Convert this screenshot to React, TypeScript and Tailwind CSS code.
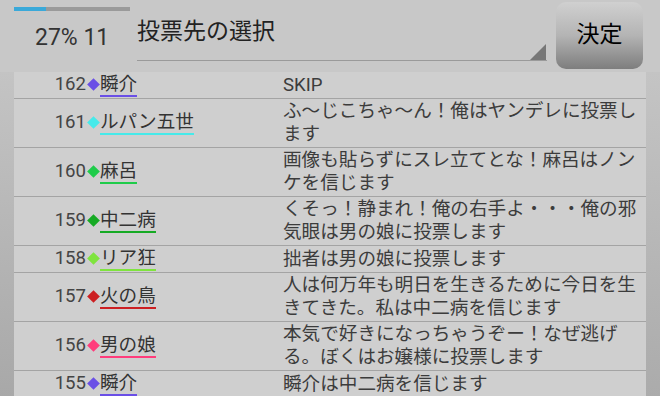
const rows = [
  { no: 162, name: "瞬介", color: "bg-[#6a4fe6]", line: "border-[#6a4fe6]", text: "SKIP" },
  { no: 161, name: "ルパン五世", color: "bg-[#46eaea]", line: "border-[#46eaea]", text: "ふ～じこちゃ～ん！俺はヤンデレに投票します" },
  { no: 160, name: "麻呂", color: "bg-[#1fcc4a]", line: "border-[#1fcc4a]", text: "画像も貼らずにスレ立てとな！麻呂はノンケを信じます" },
  { no: 159, name: "中二病", color: "bg-[#16aa24]", line: "border-[#16aa24]", text: "くそっ！静まれ！俺の右手よ・・・俺の邪気眼は男の娘に投票します" },
  { no: 158, name: "リア狂", color: "bg-[#7fe43e]", line: "border-[#7fe43e]", text: "拙者は男の娘に投票します" },
  { no: 157, name: "火の鳥", color: "bg-[#cc1f22]", line: "border-[#cc1f22]", text: "人は何万年も明日を生きるために今日を生きてきた。私は中二病を信じます" },
  { no: 156, name: "男の娘", color: "bg-[#ff3c7c]", line: "border-[#ff3c7c]", text: "本気で好きになっちゃうぞー！なぜ逃げる。ぼくはお嬢様に投票します" },
  { no: 155, name: "瞬介", color: "bg-[#6a4fe6]", line: "border-[#6a4fe6]", text: "瞬介は中二病を信じます" },
];

function Row({ r }: { r: (typeof rows)[number] }) {
  return (
    <div className="flex items-center border-b border-[#a4a4a4] py-[1px]">
      <div className="w-[269px] shrink-0 flex items-start">
        <span className="w-[72px] text-right leading-[22px] text-[#444]">{r.no}</span>
        <span className="w-[14px] h-[22px] flex items-center justify-center">
          <span className={`w-[9px] h-[9px] rotate-45 ${r.color}`} />
        </span>
        <span className={`leading-[22px] text-[#333] border-b-2 ${r.line}`}>{r.name}</span>
      </div>
      <div className="flex-1 min-w-0 leading-[23px] text-[#3c3c3c]">{r.text}</div>
    </div>
  );
}

export default function App() {
  return (
    <div
      className="w-[660px] h-[396px] overflow-hidden bg-[#c8c8c8] flex flex-col"
      style={{ fontFamily: "Roboto, 'Noto Sans CJK JP', sans-serif" }}
    >
      {/* header */}
      <div className="h-[72px] shrink-0 flex">
        <div className="w-[137px] shrink-0 pl-[14px] pt-[7px]">
          <div className="w-[116px] h-[4px] bg-[#9a9a9a]">
            <div className="w-[32px] h-full bg-[#3aa9d9]" />
          </div>
          <div className="mt-[15px] ml-[21px] text-[23px] leading-[23px] text-[#333]">27% 11</div>
        </div>
        <div className="w-[410px] h-[61px] flex justify-between items-end border-b border-[#9a9a9a]">
          <span className="self-start mt-[20px] text-[23px] leading-[23px] text-[#222]">投票先の選択</span>
          <svg width="16" height="16" viewBox="0 0 16 16" className="mr-[1px]">
            <polygon points="16,0 16,16 0,16" fill="#777" />
          </svg>
        </div>
        <button className="ml-[9px] mt-[2px] w-[87px] h-[67px] rounded-[10px] bg-gradient-to-b from-[#d0d0d0] via-[#b4b4b4] to-[#7e7e7e] text-[23px] text-black flex items-center justify-center">
          決定
        </button>
      </div>

      {/* list */}
      <div className="flex-1 flex">
        <div className="w-[14px] shrink-0 bg-gradient-to-b from-[#c4c4c4] to-[#a8a8a8]" />
        <div className="flex-1 bg-[#cfcfcf] text-[18.6px]">
          {rows.map((r) => (
            <Row key={r.no + r.name} r={r} />
          ))}
        </div>
        <div className="w-[14px] shrink-0 bg-gradient-to-b from-[#c4c4c4] to-[#ababab]" />
      </div>
    </div>
  );
}
